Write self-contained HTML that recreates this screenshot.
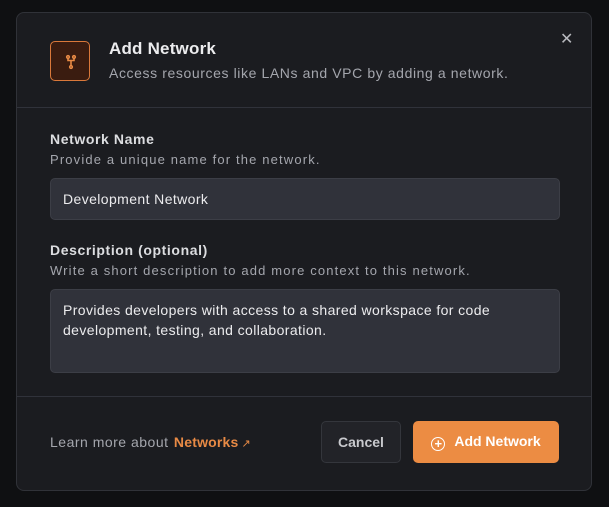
<!DOCTYPE html>
<html><head><style>
*{box-sizing:border-box;margin:0;padding:0}
body{width:609px;height:507px;background:#0f1012;font-family:"Liberation Sans",sans-serif;position:relative;overflow:hidden}
.m{position:absolute;left:16px;top:12px;width:576px;height:479px;background:#1b1c20;border:1px solid #303238;border-radius:8px}
.ic{position:absolute;left:33px;top:28px;width:40px;height:40px;border:1px solid #d9783a;border-radius:5px;background:#3a1c10}
.t{position:absolute;left:92px;top:26px;color:#ececee;font-size:17px;font-weight:bold;letter-spacing:0.2px}
.s{position:absolute;left:92px;top:52px;color:#a4a6ad;font-size:14px;letter-spacing:0.6px}
.x{position:absolute;left:543px;top:16px;color:#b8b9be;font-size:16px}
.hr{position:absolute;left:0;width:574px;height:1px;background:#30323a}
.l{position:absolute;left:33px;color:#dcdde0;font-size:14px;font-weight:bold;letter-spacing:0.6px}
.d{position:absolute;left:33px;color:#a4a6ad;font-size:13px;letter-spacing:1.15px}
.in{position:absolute;left:33px;width:510px;background:#30323a;border:1px solid #3c3e46;border-radius:5px;color:#ececee;font-size:14px;padding:0 12px;letter-spacing:0.4px}
.btn{position:absolute;top:408px;height:42px;border-radius:5px;font-size:14px;font-weight:bold;line-height:40px;text-align:center}
</style></head><body>
<div class="m">
<div class="ic"><svg width="40" height="40" viewBox="0 0 40 40"><g stroke="#e88a45" stroke-width="1.6" fill="none"><circle cx="17" cy="15" r="1.3"/><circle cx="23" cy="15" r="1.3"/><circle cx="20" cy="25" r="1.3"/><path d="M17 16.5v2h6v-2M20 18.5v5"/></g></svg></div>
<div class="t">Add Network</div>
<div class="s">Access resources like LANs and VPC by adding a network.</div>
<div class="x">✕</div>
<div class="hr" style="top:94px"></div>
<div class="l" style="top:118px">Network Name</div>
<div class="d" style="top:139px">Provide a unique name for the network.</div>
<div class="in" style="top:165px;height:42px;line-height:40px">Development Network</div>
<div class="l" style="top:229px">Description (optional)</div>
<div class="d" style="top:250px">Write a short description to add more context to this network.</div>
<div class="in" style="top:276px;height:84px;padding-top:10px;line-height:20px">Provides developers with access to a shared workspace for code development, testing, and collaboration.</div>
<div class="hr" style="top:383px"></div>
<div style="position:absolute;left:33px;top:421px;font-size:14px;color:#a4a6ad;letter-spacing:0.5px">Learn more about <b style="color:#e88a45;margin-left:1px;letter-spacing:0.2px">Networks</b><span style="color:#e88a45;font-size:11px;margin-left:3px">↗</span></div>
<div class="btn" style="left:304px;width:80px;background:#222328;border:1px solid #34363c;color:#c8c9cd">Cancel</div>
<div class="btn" style="left:396px;width:146px;background:#ec8c43;color:#fff"><span style="display:inline-block;width:14px;height:14px;border:1.5px solid #fff;border-radius:50%;line-height:11px;font-size:13px;vertical-align:-2px;margin-right:9px">+</span>Add Network</div>
</div>
</body></html>
